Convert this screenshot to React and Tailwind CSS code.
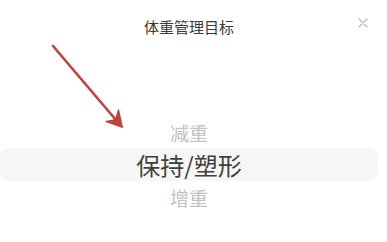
import React from "react";

const options = ["减重", "保持/塑形", "增重"];
const selected = 1;

function CloseIcon() {
  return (
    <svg width="10" height="10" viewBox="0 0 10 10" className="block">
      <path d="M1 1 L9 9 M9 1 L1 9" stroke="#bdbdbd" strokeWidth="1.3" strokeLinecap="round" />
    </svg>
  );
}

function PointerArrow() {
  return (
    <svg
      className="absolute left-0 top-0 pointer-events-none"
      width="140"
      height="140"
      viewBox="0 0 140 140"
    >
      <line x1="53" y1="46" x2="116" y2="120" stroke="#c5403a" strokeWidth="2.6" strokeLinecap="round" />
      <path d="M122.5 127.5 L105.5 121.5 L115.5 119.5 L118.5 109.5 Z" fill="#c5403a" stroke="#c5403a" strokeWidth="1" strokeLinejoin="round" />
    </svg>
  );
}

export default function App() {
  return (
    <div
      className="relative w-[387px] h-[242px] bg-white overflow-hidden"
      style={{ fontFamily: '"Noto Sans CJK SC", "Noto Sans", sans-serif' }}
    >
      <div className="relative w-[378px] pt-[16px] h-[116px]">
        <div className="text-center text-[15px] leading-[21px] text-[#3a3a3a]">体重管理目标</div>
      </div>
      <div className="absolute right-[19px] top-[18px]">
        <CloseIcon />
      </div>

      <div className="w-[378px] flex flex-col">
        {options.map((o, i) =>
          i === selected ? (
            <div
              key={o}
              className="h-[33px] rounded-[9px] bg-[#f6f6f6] flex items-center justify-center text-[24px] leading-none text-[#404040]"
            >
              {o}
            </div>
          ) : (
            <div
              key={o}
              className="h-[32px] flex items-center justify-center text-[19px] leading-none text-[#c2c2c2]"
            >
              {o}
            </div>
          )
        )}
      </div>

      <PointerArrow />
    </div>
  );
}
